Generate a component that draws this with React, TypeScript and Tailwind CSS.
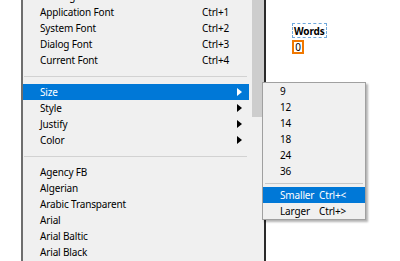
import React from "react";

const font = { fontFamily: '"Segoe UI", "Noto Sans", sans-serif' };

function Arrow({ white }: { white?: boolean }) {
  return (
    <svg width="5" height="8" viewBox="0 0 5 8" className="block">
      <path d="M0 0 L5 4 L0 8 Z" fill={white ? "#ffffff" : "#000000"} />
    </svg>
  );
}

type Item = { label: string; shortcut?: string; sub?: boolean; active?: boolean } | "sep";

const items: Item[] = [
  { label: "Message Font" },
  { label: "Application Font", shortcut: "Ctrl+1" },
  { label: "System Font", shortcut: "Ctrl+2" },
  { label: "Dialog Font", shortcut: "Ctrl+3" },
  { label: "Current Font", shortcut: "Ctrl+4" },
  "sep",
  { label: "Size", sub: true, active: true },
  { label: "Style", sub: true },
  { label: "Justify", sub: true },
  { label: "Color", sub: true },
  "sep",
  { label: "Agency FB" },
  { label: "Algerian" },
  { label: "Arabic Transparent" },
  { label: "Arial" },
  { label: "Arial Baltic" },
  { label: "Arial Black" },
];

type SubItem = { label: string; shortcut?: string; active?: boolean } | "sep";
const subItems: SubItem[] = [
  { label: "9" },
  { label: "12" },
  { label: "14" },
  { label: "18" },
  { label: "24" },
  { label: "36" },
  "sep",
  { label: "Smaller", shortcut: "Ctrl+<", active: true },
  { label: "Larger", shortcut: "Ctrl+>" },
];

export default function App() {
  return (
    <div
      className="relative w-[400px] h-[261px] overflow-hidden bg-white text-[10px] tracking-[-0.15px] text-black flex"
      style={font}
    >
      <div className="w-[21px] bg-white" />
      <div className="w-[2px] bg-[#6e6e6e]" />
      <div className="w-[229px] bg-[#f0f0f0] flex flex-col mt-[-12px]">
        {items.map((it, i) =>
          it === "sep" ? (
            <div key={i} className="h-4 flex items-center pl-[1px] pr-[5px]">
              <div className="h-px w-full bg-[#d2d2d2]" />
            </div>
          ) : (
            <div
              key={i}
              className={
                "h-4 flex items-center pl-[17px] mr-[3px] " +
                (it.active ? "bg-[#0078d7] text-white" : "")
              }
            >
              <span className="w-[162px] leading-4 whitespace-nowrap">{it.label}</span>
              <span className="w-[35px] leading-4 whitespace-nowrap">{it.shortcut ?? ""}</span>
              {it.sub ? <Arrow white={it.active} /> : null}
            </div>
          )
        )}
      </div>
      <div className="w-[12px] flex flex-col">
        <div className="h-[117px] bg-[#cdcdcd]" />
        <div className="flex-1 bg-[#f0f0f0]" />
      </div>
      <div className="w-[2px] bg-[#2b2b2b]" />
      <div className="flex-1 bg-white pl-[26px] pt-[23px] flex flex-col items-start">
        <div className="border border-dashed border-[#6fa8dc] px-[1px] h-[15px] flex items-center font-bold leading-none text-[10px]">
          Words
        </div>
        <div className="mt-[2px] border-2 border-[#f07800] w-[12px] h-[14px] flex items-center justify-center leading-none">
          0
        </div>
      </div>

      {/* submenu */}
      <div className="absolute left-[262px] top-[82px] w-[104px] h-[138px] bg-[#f0f0f0] border border-[#a0a0a0] shadow-[2px_2px_2px_rgba(0,0,0,0.3)] flex flex-col">
        {subItems.map((it, i) =>
          it === "sep" ? (
            <div key={i} className="h-[8px] flex items-center px-[2px]">
              <div className="h-px w-full bg-[#c8c8c8]" />
            </div>
          ) : (
            <div
              key={i}
              className={
                "h-4 flex items-center pl-[17px] " +
                (it.active ? "bg-[#0078d7] text-white" : "")
              }
            >
              <span className="w-[39px] leading-4 whitespace-nowrap">{it.label}</span>
              <span className="leading-4 whitespace-nowrap">{it.shortcut ?? ""}</span>
            </div>
          )
        )}
      </div>
    </div>
  );
}
